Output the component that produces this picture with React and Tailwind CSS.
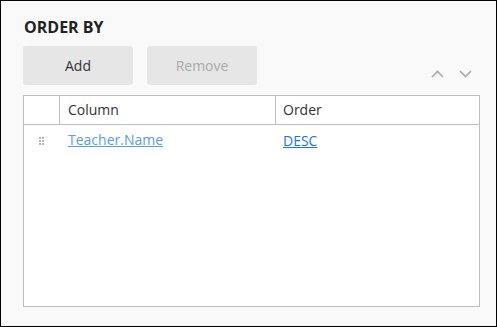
import React from "react";

function Chevron({ up }) {
  return (
    <svg width="13" height="8" viewBox="0 0 13 8" fill="none" stroke="#a8a8a8" strokeWidth="1.6">
      {up ? <path d="M1 7 L6.5 1.5 L12 7" /> : <path d="M1 1 L6.5 6.5 L12 1" />}
    </svg>
  );
}

function Grip() {
  return (
    <svg width="5" height="8" viewBox="0 0 5 8" fill="#b5b5b5">
      <rect x="0" y="0" width="2" height="2" />
      <rect x="3" y="0" width="2" height="2" />
      <rect x="0" y="3" width="2" height="2" />
      <rect x="3" y="3" width="2" height="2" />
      <rect x="0" y="6" width="2" height="2" />
      <rect x="3" y="6" width="2" height="2" />
    </svg>
  );
}

export default function App() {
  return (
    <div
      className="w-[497px] h-[327px] border border-black bg-[#f9f9f9] pl-[22px] pr-[17px] pt-[15px]"
      style={{ fontFamily: '"Open Sans", sans-serif' }}
    >
      <h2 className="text-[16px] font-bold text-[#222] leading-[22px] ml-[1px]">ORDER BY</h2>
      <div className="mt-[8px] flex items-end">
        <button className="w-[110px] h-[39px] bg-[#e6e6e6] rounded-[3px] text-[14px] text-[#333]">
          Add
        </button>
        <button className="ml-[14px] w-[110px] h-[39px] bg-[#e6e6e6] rounded-[3px] text-[14px] text-[#a9a9a9]">
          Remove
        </button>
        <div className="ml-auto flex gap-[15px] mb-[7px] mr-[7px]">
          <Chevron up />
          <Chevron />
        </div>
      </div>
      <div className="mt-[10px] w-[457px] h-[212px] border border-[#bdbdbd] bg-white">
        <div className="flex h-[29px] border-b border-[#bdbdbd] text-[14px] text-[#333]">
          <div className="w-[36px] border-r border-[#bdbdbd]" />
          <div className="w-[216px] border-r border-[#bdbdbd] pl-[8px] leading-[27px]">Column</div>
          <div className="flex-1 pl-[7px] leading-[27px]">Order</div>
        </div>
        <div className="flex text-[14px] pt-[4px]">
          <div className="w-[36px] flex justify-center pt-[8px] pr-[1px]">
            <Grip />
          </div>
          <div className="w-[216px] pl-[8px]">
            <a className="text-[#5a9ddb] underline">Teacher.Name</a>
          </div>
          <div className="flex-1 pl-[7px] pt-[1px]">
            <a className="text-[#1c74d8] underline">DESC</a>
          </div>
        </div>
      </div>
    </div>
  );
}
